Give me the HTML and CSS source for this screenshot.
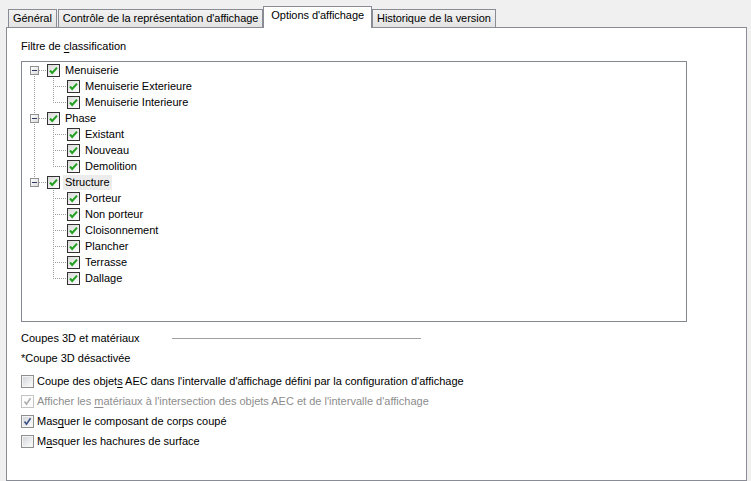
FILE: index.html
```html
<!DOCTYPE html>
<html>
<head>
  <meta charset="UTF-8">
  <title>Options d'affichage</title>
  <link rel="stylesheet" href="styles.css">
</head>
<body>

<svg width="0" height="0" class="defs">
  <defs>
    <linearGradient id="tree-fill" x1="0" y1="0" x2="1" y2="1">
      <stop offset="0" stop-color="#d8d8d8"/>
      <stop offset="1" stop-color="#ffffff"/>
    </linearGradient>
    <linearGradient id="box-fill" x1="0" y1="0" x2="1" y2="1">
      <stop offset="0" stop-color="#d3d6db"/>
      <stop offset="1" stop-color="#fbfbfb"/>
    </linearGradient>
    <symbol id="tree-check" viewBox="0 0 13 13">
      <rect x="0.5" y="0.5" width="12" height="12" fill="url(#tree-fill)" stroke="#333333"/>
      <path d="M3 6.5 L5.2 9 L10 3.6" fill="none" stroke="#21a020" stroke-width="2"/>
    </symbol>
    <symbol id="box-off" viewBox="0 0 13 13">
      <rect x="0.5" y="0.5" width="12" height="12" fill="#f4f4f4" stroke="#8e8f8f"/>
      <rect x="2" y="2" width="9" height="9" fill="url(#box-fill)"/>
    </symbol>
    <symbol id="box-on" viewBox="0 0 13 13">
      <rect x="0.5" y="0.5" width="12" height="12" fill="#f4f4f4" stroke="#8e8f8f"/>
      <rect x="2" y="2" width="9" height="9" fill="url(#box-fill)"/>
      <path d="M3.5 6.5 L5.5 9.2 L9.5 3.3" fill="none" stroke="#3a4f85" stroke-width="1.6"/>
    </symbol>
    <symbol id="box-dis" viewBox="0 0 13 13">
      <rect x="0.5" y="0.5" width="12" height="12" fill="#fcfcfc" stroke="#c4c4c4"/>
      <path d="M3.5 6.5 L5.5 9.2 L9.5 3.3" fill="none" stroke="#aeaeae" stroke-width="1.6"/>
    </symbol>
  </defs>
</svg>

<div class="tabs">
  <div class="tab">Général</div>
  <div class="tab">Contrôle de la représentation d'affichage</div>
  <div class="tab active">Options d'affichage</div>
  <div class="tab">Historique de la version</div>
</div>

<div class="panel">
  <div class="caption">Filtre de <u>c</u>lassification</div>

  <div class="tree">
    <!-- Menuiserie -->
    <div class="row">
      <span class="rail root first"><span class="exp"></span></span>
      <svg class="chk"><use href="#tree-check"/></svg>
      <span class="label">Menuiserie</span>
    </div>
    <div class="row">
      <span class="rail cont"></span><span class="branch"></span>
      <svg class="chk"><use href="#tree-check"/></svg>
      <span class="label">Menuiserie Exterieure</span>
    </div>
    <div class="row">
      <span class="rail cont"></span><span class="branch last"></span>
      <svg class="chk"><use href="#tree-check"/></svg>
      <span class="label">Menuiserie Interieure</span>
    </div>

    <!-- Phase -->
    <div class="row">
      <span class="rail root"><span class="exp"></span></span>
      <svg class="chk"><use href="#tree-check"/></svg>
      <span class="label">Phase</span>
    </div>
    <div class="row">
      <span class="rail cont"></span><span class="branch"></span>
      <svg class="chk"><use href="#tree-check"/></svg>
      <span class="label">Existant</span>
    </div>
    <div class="row">
      <span class="rail cont"></span><span class="branch"></span>
      <svg class="chk"><use href="#tree-check"/></svg>
      <span class="label">Nouveau</span>
    </div>
    <div class="row">
      <span class="rail cont"></span><span class="branch last"></span>
      <svg class="chk"><use href="#tree-check"/></svg>
      <span class="label">Demolition</span>
    </div>

    <!-- Structure -->
    <div class="row">
      <span class="rail root last"><span class="exp"></span></span>
      <svg class="chk"><use href="#tree-check"/></svg>
      <span class="label selected">Structure</span>
    </div>
    <div class="row">
      <span class="rail"></span><span class="branch"></span>
      <svg class="chk"><use href="#tree-check"/></svg>
      <span class="label">Porteur</span>
    </div>
    <div class="row">
      <span class="rail"></span><span class="branch"></span>
      <svg class="chk"><use href="#tree-check"/></svg>
      <span class="label">Non porteur</span>
    </div>
    <div class="row">
      <span class="rail"></span><span class="branch"></span>
      <svg class="chk"><use href="#tree-check"/></svg>
      <span class="label">Cloisonnement</span>
    </div>
    <div class="row">
      <span class="rail"></span><span class="branch"></span>
      <svg class="chk"><use href="#tree-check"/></svg>
      <span class="label">Plancher</span>
    </div>
    <div class="row">
      <span class="rail"></span><span class="branch"></span>
      <svg class="chk"><use href="#tree-check"/></svg>
      <span class="label">Terrasse</span>
    </div>
    <div class="row">
      <span class="rail"></span><span class="branch last"></span>
      <svg class="chk"><use href="#tree-check"/></svg>
      <span class="label">Dallage</span>
    </div>
  </div>

  <div class="group-title">
    <span>Coupes 3D et matériaux</span>
    <span class="rule"></span>
  </div>
  <div class="note">*Coupe 3D désactivée</div>

  <div class="opt"><svg class="box"><use href="#box-off"/></svg><span>Coupe des objet<u>s</u> AEC dans l'intervalle d'affichage défini par la configuration d'affichage</span></div>
  <div class="opt disabled"><svg class="box"><use href="#box-dis"/></svg><span>Afficher les <u>m</u>atériaux à l'intersection des objets AEC et de l'intervalle d'affichage</span></div>
  <div class="opt"><svg class="box"><use href="#box-on"/></svg><span>Mas<u>q</u>uer le composant de corps coupé</span></div>
  <div class="opt"><svg class="box"><use href="#box-off"/></svg><span>M<u>a</u>squer les hachures de surface</span></div>
</div>

</body>
</html>
```

FILE: styles.css
```css
body {
  margin: 0;
  background: #f0f0f0;
  font-family: "Liberation Sans", Arial, sans-serif;
  font-size: 11px;
  color: #000;
}

.defs {
  display: block;
  width: 0;
  height: 0;
}

u {
  text-decoration-thickness: 1px;
  text-underline-offset: 2px;
}

/* tab strip */
.tabs {
  display: flex;
  align-items: flex-end;
  height: 21px;
  margin: 7px 0 -1px 0;
  padding-left: 8px;
  position: relative;
  z-index: 1;
}
.tab {
  height: 17px;
  line-height: 17px;
  padding: 0 4px;
  margin: 0 1px 1px 0;
  border: 1px solid #898c95;
  border-bottom: none;
  background: linear-gradient(#f2f2f2, #ebebeb 50%, #e3e3e3);
  white-space: nowrap;
  letter-spacing: -0.05px;
}
.tab.active {
  height: 21px;
  line-height: 17px;
  margin: 0 0 0 -1px;
  padding: 0 7px;
  background: #fff;
}

/* page body */
.panel {
  box-sizing: border-box;
  width: 741px;
  height: 454px;
  margin-left: 6px;
  border: 1px solid #898c95;
  background: #fff;
  padding: 10px 0 0 14px;
}

.caption {
  line-height: 16px;
  margin-bottom: 7px;
}

.tree {
  box-sizing: border-box;
  width: 666px;
  height: 261px;
  border: 1px solid #828790;
}

.row {
  display: flex;
  align-items: center;
  height: 16px;
  white-space: nowrap;
}

/* dotted connector lines */
.rail, .branch {
  flex: none;
  height: 16px;
  background-repeat: no-repeat;
}
.rail {
  width: 25px;
  display: flex;
  align-items: center;
}
.rail.cont, .rail.root {
  background-image: repeating-linear-gradient(to bottom, #a0a0a0 0 1px, transparent 1px 2px);
  background-size: 1px 16px;
  background-position: 12px 0;
}
.rail.root {
  background-image:
    repeating-linear-gradient(to right, #a0a0a0 0 1px, transparent 1px 2px),
    repeating-linear-gradient(to bottom, #a0a0a0 0 1px, transparent 1px 2px);
  background-size: 8px 1px, 1px 16px;
  background-position: 17px 8px, 12px 0;
}
.rail.root.first {
  background-size: 8px 1px, 1px 8px;
  background-position: 17px 8px, 12px 8px;
}
.rail.root.last {
  background-size: 8px 1px, 1px 8px;
  background-position: 17px 8px, 12px 0;
}
.branch {
  width: 20px;
  background-image:
    repeating-linear-gradient(to right, #a0a0a0 0 1px, transparent 1px 2px),
    repeating-linear-gradient(to bottom, #a0a0a0 0 1px, transparent 1px 2px);
  background-size: 14px 1px, 1px 16px;
  background-position: 6px 8px, 6px 0;
}
.branch.last {
  background-size: 14px 1px, 1px 9px;
}

.exp {
  box-sizing: border-box;
  width: 9px;
  height: 9px;
  margin-left: 8px;
  border: 1px solid #919191;
  background: linear-gradient(135deg, #ffffff, #dcdcdc);
  display: flex;
  align-items: center;
  justify-content: center;
}
.exp::before {
  content: "";
  width: 5px;
  height: 1px;
  background: #2b3a5c;
}

.chk {
  flex: none;
  width: 13px;
  height: 13px;
  margin-right: 3px;
}

.label {
  padding: 0 2px;
  line-height: 15px;
}
.label.selected {
  background: #ececec;
}

/* options below the tree */
.group-title {
  display: flex;
  align-items: center;
  margin-top: 8px;
  line-height: 16px;
}
.rule {
  width: 249px;
  height: 1px;
  margin-left: 32px;
  background: #a0a0a0;
}

.note {
  line-height: 16px;
  margin-top: 4px;
}

.opt {
  display: flex;
  align-items: center;
  height: 20px;
}
.note + .opt {
  margin-top: 5px;
}
.box {
  flex: none;
  width: 13px;
  height: 13px;
  margin-right: 3px;
}
.opt.disabled {
  color: #8d8d8d;
}
```
